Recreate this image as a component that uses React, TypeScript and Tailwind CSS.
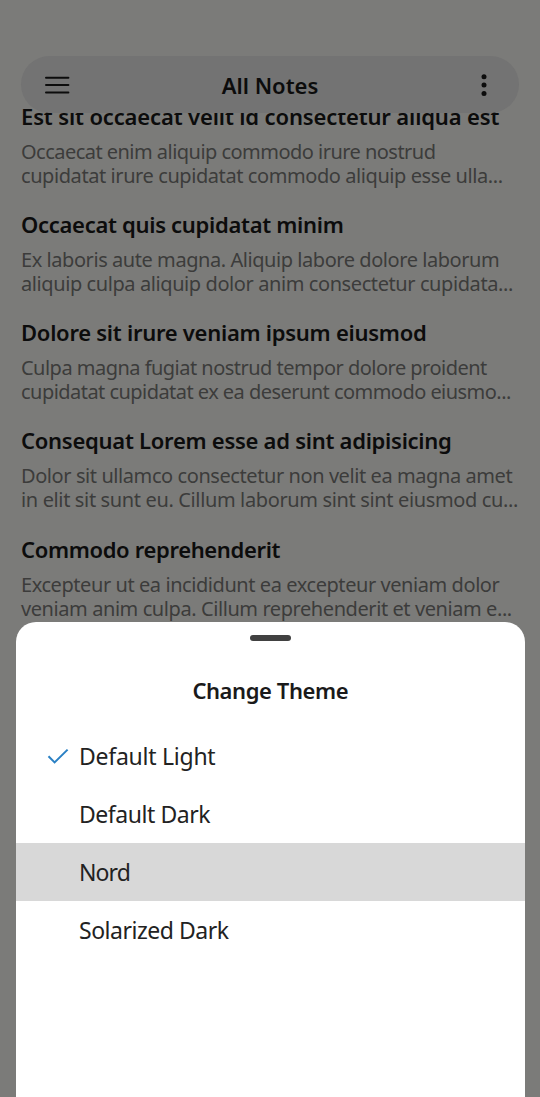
type Note = { title: string; titleClass: string; lines: { text: string; className: string }[] };

const notes: Note[] = [
  {
    title: "Est sit occaecat velit id consectetur aliqua est",
    titleClass: "tracking-[-0.14px]",
    lines: [
      { text: "Occaecat enim aliquip commodo irure nostrud", className: "tracking-[-0.53px]" },
      { text: "cupidatat irure cupidatat commodo aliquip esse ulla...", className: "tracking-[-0.42px]" },
    ],
  },
  {
    title: "Occaecat quis cupidatat minim",
    titleClass: "tracking-[-0.3px]",
    lines: [
      { text: "Ex laboris aute magna. Aliquip labore dolore laborum", className: "tracking-[-0.44px]" },
      { text: "aliquip culpa aliquip dolor anim consectetur cupidata...", className: "tracking-[-0.41px]" },
    ],
  },
  {
    title: "Dolore sit irure veniam ipsum eiusmod",
    titleClass: "tracking-[-0.27px]",
    lines: [
      { text: "Culpa magna fugiat nostrud tempor dolore proident", className: "tracking-[-0.52px]" },
      { text: "cupidatat cupidatat ex ea deserunt commodo eiusmo...", className: "tracking-[-0.54px]" },
    ],
  },
  {
    title: "Consequat Lorem esse ad sint adipisicing",
    titleClass: "tracking-[-0.27px]",
    lines: [
      { text: "Dolor sit ullamco consectetur non velit ea magna amet", className: "tracking-[-0.42px]" },
      { text: "in elit sit sunt eu. Cillum laborum sint sint eiusmod cu...", className: "tracking-[-0.36px]" },
    ],
  },
  {
    title: "Commodo reprehenderit",
    titleClass: "tracking-[-0.35px]",
    lines: [
      { text: "Excepteur ut ea incididunt ea excepteur veniam dolor", className: "tracking-[-0.43px]" },
      { text: "veniam anim culpa. Cillum reprehenderit et veniam e...", className: "tracking-[-0.42px]" },
    ],
  },
];

const themes = [
  { name: "Default Light", selected: true, pressed: false, className: "tracking-[-0.25px]" },
  { name: "Default Dark", selected: false, pressed: false, className: "tracking-[-0.45px]" },
  { name: "Nord", selected: false, pressed: true, className: "tracking-[-0.9px]" },
  { name: "Solarized Dark", selected: false, pressed: false, className: "tracking-[-0.48px]" },
];

function Header() {
  return (
    <header className="absolute top-14 left-[21px] grid h-[57px] w-[498px] grid-cols-[1fr_auto_1fr] items-center rounded-full bg-[#737373] pr-[30px] pl-6 text-[#0c0c0c]">
      <button aria-label="Menu" className="flex">
        <svg width="25" height="20" viewBox="0 0 25 20" stroke="currentColor" strokeWidth="2" strokeLinecap="round">
          <path d="M1 2.8h22.4M1 10.1h22.4M1 17.4h22.4" />
        </svg>
      </button>
      <h1 className="pl-1.5 text-[22px] leading-[30px] font-semibold">All Notes</h1>
      <button aria-label="More options" className="flex justify-end">
        <svg width="10" height="24" viewBox="0 0 10 24" fill="currentColor">
          <circle cx="5" cy="3.8" r="2.5" />
          <circle cx="5" cy="12.1" r="2.5" />
          <circle cx="5" cy="20.5" r="2.5" />
        </svg>
      </button>
    </header>
  );
}

function NoteItem({ note }: { note: Note }) {
  return (
    <article className="flex flex-col gap-[9px] whitespace-nowrap">
      <h2 className={`text-[22px] leading-[30px] font-semibold text-[#0c0c0c] ${note.titleClass}`}>{note.title}</h2>
      <div className="text-[20px] leading-6 text-[#3c3c3b]">
        {note.lines.map((line) => (
          <p key={line.text} className={line.className}>
            {line.text}
          </p>
        ))}
      </div>
    </article>
  );
}

function ThemeSheet() {
  return (
    <section className="absolute top-[622px] bottom-0 left-4 flex w-[508.5px] flex-col rounded-t-[20px] bg-white text-[#222222]">
      <div className="mx-auto mt-[13px] h-[5.5px] w-[41px] rounded-full bg-[#414141]" />
      <h2 className="mt-[34px] text-center text-[22px] leading-[30px] font-semibold tracking-[-0.42px] text-[#1a1a1a]">
        Change Theme
      </h2>
      <ul className="mt-[22.4px] flex flex-col">
        {themes.map((theme) => (
          <li
            key={theme.name}
            className={`flex h-[57.9px] items-center pl-[31px] text-[23px] ${theme.pressed ? "bg-[#d8d8d8]" : ""}`}
          >
            <span className="flex w-8">
              {theme.selected && (
                <svg width="23" height="18" viewBox="0 0 23 18" fill="none" stroke="#2a80c4" strokeWidth="2">
                  <path d="M1.5 9.2l6.1 6.2L20.6 2.6" />
                </svg>
              )}
            </span>
            <span className={`pt-px ${theme.className}`}>{theme.name}</span>
          </li>
        ))}
      </ul>
    </section>
  );
}

export default function App() {
  return (
    <div className="relative h-[1097px] w-[540px] overflow-hidden bg-[#7b7b79] font-['Noto_Sans',sans-serif]">
      <main className="flex flex-col gap-[21.25px] px-[21px] pt-[100.5px]">
        {notes.map((note) => (
          <NoteItem key={note.title} note={note} />
        ))}
      </main>
      <Header />
      <ThemeSheet />
    </div>
  );
}
